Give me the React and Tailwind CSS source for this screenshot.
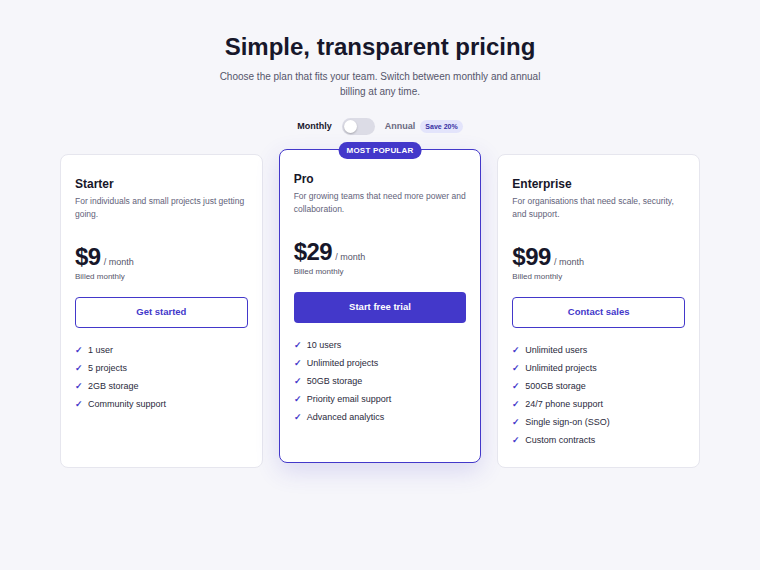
import React, { useState } from 'react';

const plans = [
    {
        name: 'Starter',
        desc: 'For individuals and small projects just getting going.',
        price: 9,
        cta: 'Get started',
        features: ['1 user', '5 projects', '2GB storage', 'Community support'],
    },
    {
        name: 'Pro',
        desc: 'For growing teams that need more power and collaboration.',
        price: 29,
        cta: 'Start free trial',
        popular: true,
        features: ['10 users', 'Unlimited projects', '50GB storage', 'Priority email support', 'Advanced analytics'],
    },
    {
        name: 'Enterprise',
        desc: 'For organisations that need scale, security, and support.',
        price: 99,
        cta: 'Contact sales',
        features: ['Unlimited users', 'Unlimited projects', '500GB storage', '24/7 phone support', 'Single sign-on (SSO)', 'Custom contracts'],
    },
];

function PlanCard({ plan }) {
    const cardClass = plan.popular
        ? 'relative -mt-[5px] mb-[5px] bg-white rounded-lg border-[1.5px] border-[#4338ca] shadow-[0_8px_24px_rgba(67,56,202,0.16)]'
        : 'relative bg-white rounded-lg border border-[#e6e6ee]';

    return (
        <div className={cardClass}>
            {plan.popular && (
                <span className="absolute -top-[8px] left-1/2 -translate-x-1/2 bg-[#4338ca] text-white text-[8px] font-bold leading-[17px] px-[8px] rounded-full tracking-[0.2px] whitespace-nowrap">
                    MOST POPULAR
                </span>
            )}
            <div className="px-[14px] pt-[21px] pb-[20px]">
                <h3 className="text-[12px] leading-[16px] font-bold text-[#17172a]">{plan.name}</h3>
                <p className="mt-[3px] text-[8.5px] leading-[13px] text-[#62627a]">{plan.desc}</p>

                <div className="mt-[24px] flex items-baseline gap-[3px]">
                    <span className="text-[24px] leading-[24px] font-bold text-[#17172a] tracking-[-0.5px]">${plan.price}</span>
                    <span className="text-[9px] text-[#55556a]">/ month</span>
                </div>
                <p className="mt-[1px] text-[8px] leading-[12px] text-[#55556a]">Billed monthly</p>

                {plan.popular ? (
                    <button className="mt-[14px] w-full h-[31px] rounded-[4px] bg-[#4338ca] text-white text-[9.5px] font-bold">
                        {plan.cta}
                    </button>
                ) : (
                    <button className="mt-[14px] w-full h-[31px] rounded-[4px] border-[1.5px] border-[#4338ca] text-[#4338ca] text-[9.5px] font-bold bg-white">
                        {plan.cta}
                    </button>
                )}

                <ul className="mt-[16px] flex flex-col gap-[5px]">
                    {plan.features.map((f) => (
                        <li key={f} className="flex items-center gap-[7px] text-[9px] leading-[13px] text-[#2a2a3c]">
                            <span className="text-[#4338ca] text-[9px] font-bold w-[6px]">✓</span>
                            {f}
                        </li>
                    ))}
                </ul>
            </div>
        </div>
    );
}

export default function App() {
    const [annual, setAnnual] = useState(false);

    return (
        <div className="min-h-screen bg-[#f6f6fa] pt-[32px] pb-10 font-['Liberation_Sans',Arial,sans-serif]">
            <div className="text-center">
                <h1 className="text-[24px] leading-[30px] font-bold text-[#17172a]">Simple, transparent pricing</h1>
                <p className="mt-[7px] mx-auto w-[330px] text-[10px] leading-[15px] text-[#55556a]">
                    Choose the plan that fits your team. Switch between monthly and annual billing at any time.
                </p>
            </div>

            <div className="mt-[19px] flex items-center justify-center">
                <span className="text-[9px] font-bold text-[#17172a]">Monthly</span>
                <button
                    onClick={() => setAnnual(!annual)}
                    className="mx-[10px] w-[33px] h-[17px] rounded-full bg-[#dcdce6] p-[2px] flex items-center"
                >
                    <span className={'block w-[13px] h-[13px] rounded-full bg-white shadow-[0_1px_2px_rgba(0,0,0,0.25)] ' + (annual ? 'ml-auto' : '')}></span>
                </button>
                <span className="text-[9px] font-bold text-[#6a6a80]">Annual</span>
                <span className="ml-[5px] bg-[#e3e4fb] text-[#3730a3] text-[7px] font-bold leading-[13px] px-[5px] rounded-full">Save 20%</span>
            </div>

            <div className="mt-[19px] mx-auto w-[640px] grid grid-cols-3 gap-[16px]">
                {plans.map((p) => (
                    <PlanCard key={p.name} plan={p} />
                ))}
            </div>
        </div>
    );
}
